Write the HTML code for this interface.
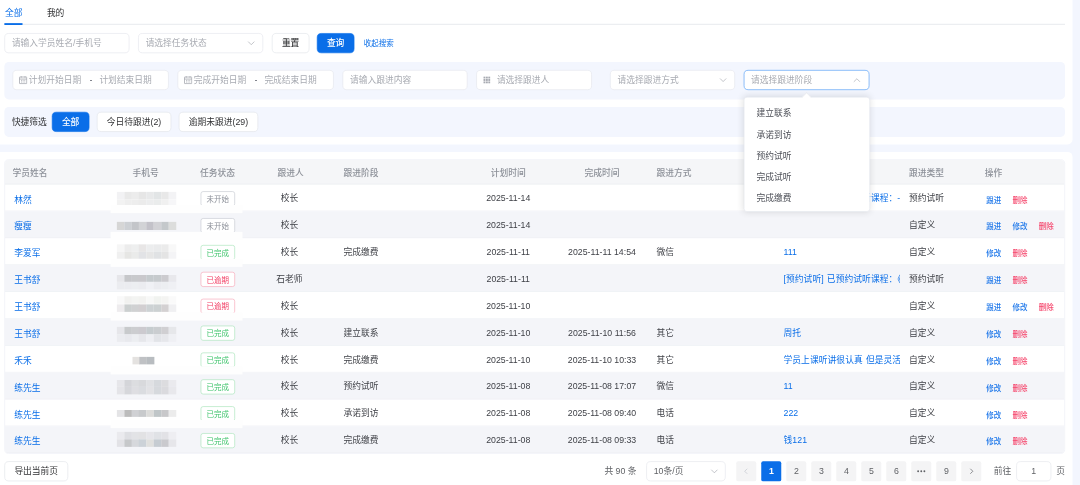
<!DOCTYPE html>
<html lang="zh-CN">
<head>
<meta charset="utf-8">
<title>跟进任务</title>
<style>
*{box-sizing:border-box;margin:0;padding:0}
html,body{width:1080px;height:485px;overflow:hidden;background:#f3f6fe}
body{font-family:"Liberation Sans","Noto Sans CJK SC",sans-serif;font-size:14px;color:#303133}
#stage{position:absolute;left:0;top:0;width:1728px;height:776px;transform:scale(.625);transform-origin:0 0;overflow:hidden;filter:blur(.55px);background:#f3f6fe}
.abs{position:absolute}
.card{position:absolute;background:#fff;border-radius:8px}
.tabtxt{position:absolute;top:10px;font-size:14px;line-height:20px;color:#303133}
.inp{position:absolute;height:32px;background:#fff;border:1px solid #e3e6ec;border-radius:7px;font-size:14px;line-height:30px;color:#a8abb2;padding-left:11px;white-space:nowrap;overflow:hidden}
.inp span{position:absolute;top:0;line-height:30px;white-space:nowrap}
.inp svg{position:absolute}
.btn{position:absolute;height:32px;border:1px solid #e0e3e9;border-radius:7px;background:#fff;font-size:14px;line-height:30px;text-align:center;color:#303133;white-space:nowrap}
.btn.pri{background:#0a6ee8;border-color:#0a6ee8;color:#fff;font-weight:500}
.panel{position:absolute;left:7px;width:1697px;background:#f3f6fe;border-radius:7px}
.tbl{position:absolute;left:7px;top:255px;width:1697px;height:471px;border:1px solid #ebeef5;border-radius:7px;overflow:hidden;background:#fff}

.th{position:absolute;left:0;top:0;width:100%;height:39px;background:#f5f6f8;border-bottom:1px solid #e9ebf0}
.th span{position:absolute;top:1.6px;line-height:38px;font-size:14px;font-weight:500;color:#8d9199;white-space:nowrap}
.tr{position:absolute;left:0;width:100%;height:43px;border-bottom:1px solid #eef0f4}
.tr.s{background:#f4f5f9}
.tr span,.tr a{position:absolute;top:2px;line-height:41px;font-size:14px;white-space:nowrap;color:#3f4147}
.tr a{color:#0a6ee8;text-decoration:none}
.tr .c{transform:translateX(-50%)}
.tr .op{top:4.8px;font-size:12px;font-weight:500;color:#1f78ea}
.tr .op.del{color:#f5466c}
.tag{position:absolute;top:10.5px;height:24px;width:55.5px;border:1px solid #c6c9d1;border-radius:4px;background:#fff;font-size:12px;line-height:25.4px;text-align:center;color:#8c9099}
.tag.g{border-color:#a6e3b8;color:#3fc46c;background:#fff}
.tag.r{border-color:#f7a3b5;color:#f23d63;background:#fff}
.mb{position:absolute;width:12px;display:block}
.pg{position:absolute;top:738px;width:32px;height:32px;border-radius:3px;background:#f4f4f5;font-size:14px;line-height:32px;text-align:center;color:#606266}
.pg.on{background:#0a6ee8;color:#fff;font-weight:bold}
.dd{z-index:5;position:absolute;left:1189.5px;top:155px;width:202px;height:184px;background:#fff;border:1px solid #e4e7ed;border-radius:5px;box-shadow:0 0 12px rgba(0,0,0,.12)}
.dd div{position:absolute;left:20px;line-height:34px;font-size:14px;color:#4a4d55;white-space:nowrap}
</style>
</head>
<body>
<div id="stage">
<div class="card" style="left:-10px;top:-10px;width:1726px;height:241px"></div>
<div class="abs" style="left:7px;top:37.5px;width:1697px;height:2px;background:#eceef1"></div>
<div class="abs" style="left:7px;top:36.5px;width:29px;height:3px;background:#0a6ee8"></div>
<div class="tabtxt" style="left:8px;color:#0a6ee8">全部</div>
<div class="tabtxt" style="left:75px">我的</div>
<div class="inp" style="left:7px;top:53px;width:200px">请输入学员姓名/手机号</div>
<div class="inp" style="left:221px;top:53px;width:200px">请选择任务状态</div><svg class="abs" style="left:395px;top:62px" width="14" height="14" viewBox="0 0 14 14"><polyline points="2.5,5 7,9.5 11.5,5" fill="none" stroke="#a8abb2" stroke-width="1.1" stroke-linecap="round" stroke-linejoin="round"/></svg>
<div class="btn" style="left:435px;top:53px;width:60px;font-weight:500">重置</div>
<div class="btn pri" style="left:507px;top:53px;width:60px">查询</div>
<div class="abs" style="left:582px;top:59px;font-size:12px;line-height:20px;color:#0a6ee8">收起搜索</div>
<div class="panel" style="top:99px;height:60px"></div>
<div class="inp" style="left:20px;top:112px;width:250px"><span style="left:25px">计划开始日期</span><span style="left:122.5px;top:-1.5px;font-weight:bold;font-size:12px;color:#7d8088">-</span><span style="left:138px">计划结束日期</span></div><svg class="abs" style="left:30px;top:121px" width="14" height="14" viewBox="0 0 14 14" fill="none" stroke="#9da0a8" stroke-width="1.15"><rect x="1.2" y="2.2" width="11.6" height="10.6" rx="0.5"/><line x1="1.2" y1="5.5" x2="12.8" y2="5.5"/><line x1="4" y1="1" x2="4" y2="3.2"/><line x1="10" y1="1" x2="10" y2="3.2"/><line x1="3.6" y1="7.6" x2="5.2" y2="7.6"/><line x1="6.2" y1="7.6" x2="7.8" y2="7.6"/><line x1="8.8" y1="7.6" x2="10.4" y2="7.6"/><line x1="3.6" y1="10.2" x2="5.2" y2="10.2"/><line x1="6.2" y1="10.2" x2="7.8" y2="10.2"/><line x1="8.8" y1="10.2" x2="10.4" y2="10.2"/></svg>
<div class="inp" style="left:284px;top:112px;width:250px"><span style="left:25px">完成开始日期</span><span style="left:122.5px;top:-1.5px;font-weight:bold;font-size:12px;color:#7d8088">-</span><span style="left:138px">完成结束日期</span></div><svg class="abs" style="left:294px;top:121px" width="14" height="14" viewBox="0 0 14 14" fill="none" stroke="#9da0a8" stroke-width="1.15"><rect x="1.2" y="2.2" width="11.6" height="10.6" rx="0.5"/><line x1="1.2" y1="5.5" x2="12.8" y2="5.5"/><line x1="4" y1="1" x2="4" y2="3.2"/><line x1="10" y1="1" x2="10" y2="3.2"/><line x1="3.6" y1="7.6" x2="5.2" y2="7.6"/><line x1="6.2" y1="7.6" x2="7.8" y2="7.6"/><line x1="8.8" y1="7.6" x2="10.4" y2="7.6"/><line x1="3.6" y1="10.2" x2="5.2" y2="10.2"/><line x1="6.2" y1="10.2" x2="7.8" y2="10.2"/><line x1="8.8" y1="10.2" x2="10.4" y2="10.2"/></svg>
<div class="inp" style="left:548px;top:112px;width:200px">请输入跟进内容</div>
<div class="inp" style="left:762px;top:112px;width:184.5px;padding-left:32px">请选择跟进人</div><svg class="abs" style="left:773px;top:122px" width="12" height="12" viewBox="0 0 12 12" fill="#a8abb2"><rect x="0.5" y="0.5" width="3.1" height="3.1"/><rect x="0.5" y="4.4" width="3.1" height="3.1"/><rect x="0.5" y="8.3" width="3.1" height="3.1"/><rect x="4.4" y="0.5" width="3.1" height="3.1"/><rect x="4.4" y="4.4" width="3.1" height="3.1"/><rect x="4.4" y="8.3" width="3.1" height="3.1"/><rect x="8.3" y="0.5" width="3.1" height="3.1"/><rect x="8.3" y="4.4" width="3.1" height="3.1"/><rect x="8.3" y="8.3" width="3.1" height="3.1"/></svg>
<div class="inp" style="left:976px;top:112px;width:200px">请选择跟进方式</div><svg class="abs" style="left:1150px;top:121px" width="14" height="14" viewBox="0 0 14 14"><polyline points="2.5,5 7,9.5 11.5,5" fill="none" stroke="#a8abb2" stroke-width="1.1" stroke-linecap="round" stroke-linejoin="round"/></svg>
<div class="inp" style="left:1189.5px;top:112px;width:201px;height:32px;border:1.8px solid #4a98f5;border-radius:7px;padding-left:11px;line-height:29px">请选择跟进阶段</div><svg class="abs" style="left:1364px;top:121px" width="14" height="14" viewBox="0 0 14 14"><polyline points="2.5,9.5 7,5 11.5,9.5" fill="none" stroke="#a8abb2" stroke-width="1.1" stroke-linecap="round" stroke-linejoin="round"/></svg>
<div class="panel" style="top:171px;height:48px"></div>
<div class="abs" style="left:19px;top:185px;line-height:20px;font-size:14px;color:#303133">快捷筛选</div>
<div class="btn pri" style="left:83px;top:179px;width:60px">全部</div>
<div class="btn" style="left:155px;top:179px;width:119px">今日待跟进(2)</div>
<div class="btn" style="left:286px;top:179px;width:127px">逾期未跟进(29)</div>
<div class="card" style="left:-10px;top:243px;width:1726px;height:560px"></div>
<div class="tbl">
<div class="th"><span style="left:12px">学员姓名</span><span style="left:225.2px;transform:translateX(-50%)">手机号</span><span style="left:340px;transform:translateX(-50%)">任务状态</span><span style="left:457.2px;transform:translateX(-50%)">跟进人</span><span style="left:541.6px">跟进阶段</span><span style="left:805.2px;transform:translateX(-50%)">计划时间</span><span style="left:955.2px;transform:translateX(-50%)">完成时间</span><span style="left:1042.4px">跟进方式</span><span style="left:1245.6px">跟进内容</span><span style="left:1446.4px">跟进类型</span><span style="left:1567.6px">操作</span></div>
<div class="tr" style="top:39px"><a style="left:14.7px;top:4.3px">林然</a><i class="mb" style="left:178.9px;top:11.8px;height:12.2px;background:#f2f2f4"></i><i class="mb" style="left:190.8px;top:11.8px;height:12.2px;background:#e9e9e9"></i><i class="mb" style="left:202.6px;top:11.8px;height:12.2px;background:#ececec"></i><i class="mb" style="left:214.4px;top:11.8px;height:12.2px;background:#e6e6e6"></i><i class="mb" style="left:226.3px;top:11.8px;height:12.2px;background:#e8e9ea"></i><i class="mb" style="left:238.2px;top:11.8px;height:12.2px;background:#e2e5e6"></i><i class="mb" style="left:250.0px;top:11.8px;height:12.2px;background:#e8e8e8"></i><i class="mb" style="left:261.9px;top:11.8px;height:12.2px;background:#f3f3f5"></i><i class="mb" style="left:178.9px;top:24.0px;height:12.2px;background:#f2f2f2"></i><i class="mb" style="left:190.8px;top:24.0px;height:12.2px;background:#eeeeee"></i><i class="mb" style="left:202.6px;top:24.0px;height:12.2px;background:#ededed"></i><i class="mb" style="left:214.4px;top:24.0px;height:12.2px;background:#ebebeb"></i><i class="mb" style="left:226.3px;top:24.0px;height:12.2px;background:#ecedee"></i><i class="mb" style="left:238.2px;top:24.0px;height:12.2px;background:#eaecec"></i><i class="mb" style="left:250.0px;top:24.0px;height:12.2px;background:#f0f0f0"></i><i class="mb" style="left:261.9px;top:24.0px;height:12.2px;background:#f6f6f8"></i><div class="tag " style="left:312.6px">未开始</div><i class="mb" style="left:169px;top:33.4px;width:211px;height:12.6px;background:#fefefe;z-index:2"></i><span class="c" style="left:455.2px">校长</span><span class="c" style="left:805.2px">2025-11-14</span><a style="left:1245.6px;width:186.4px;overflow:hidden;letter-spacing:.1px;word-spacing:1px">[预约试听] 已预约试听课程：-</a><span style="left:1446.4px">预约试听</span><span class="op" style="left:1570px">跟进</span><span class="op del" style="left:1612px">删除</span></div>
<div class="tr s" style="top:82px"><a style="left:14.7px;top:4.3px">瘦瘦</a><i class="mb" style="left:178.9px;top:17.2px;height:12.4px;background:#d6d6d6"></i><i class="mb" style="left:190.8px;top:17.2px;height:12.4px;background:#cdd0d4"></i><i class="mb" style="left:202.6px;top:17.2px;height:12.4px;background:#c3c5c9"></i><i class="mb" style="left:214.4px;top:17.2px;height:12.4px;background:#d2d3d6"></i><i class="mb" style="left:226.3px;top:17.2px;height:12.4px;background:#c3c2c9"></i><i class="mb" style="left:238.2px;top:17.2px;height:12.4px;background:#d2d2d6"></i><i class="mb" style="left:250.0px;top:17.2px;height:12.4px;background:#c4c8cb"></i><i class="mb" style="left:261.9px;top:17.2px;height:12.4px;background:#dcdddc"></i><div class="tag " style="left:312.6px">未开始</div><i class="mb" style="left:169px;top:33.4px;width:211px;height:12.6px;background:#fefefe;z-index:2"></i><span class="c" style="left:455.2px">校长</span><span class="c" style="left:805.2px">2025-11-14</span><span style="left:1446.4px">自定义</span><span class="op" style="left:1570px">跟进</span><span class="op" style="left:1612px">修改</span><span class="op del" style="left:1654px">删除</span></div>
<div class="tr" style="top:125px"><a style="left:14.7px;top:4.3px">李爱军</a><i class="mb" style="left:178.9px;top:10.0px;height:12.2px;background:#f6f6f6"></i><i class="mb" style="left:190.8px;top:10.0px;height:12.2px;background:#ececec"></i><i class="mb" style="left:202.6px;top:10.0px;height:12.2px;background:#eeefef"></i><i class="mb" style="left:214.4px;top:10.0px;height:12.2px;background:#e8e6e6"></i><i class="mb" style="left:226.3px;top:10.0px;height:12.2px;background:#ecedee"></i><i class="mb" style="left:238.2px;top:10.0px;height:12.2px;background:#eaebec"></i><i class="mb" style="left:250.0px;top:10.0px;height:12.2px;background:#ebebeb"></i><i class="mb" style="left:261.9px;top:10.0px;height:12.2px;background:#f8f8f8"></i><i class="mb" style="left:178.9px;top:22.2px;height:12.2px;background:#f0f0f0"></i><i class="mb" style="left:190.8px;top:22.2px;height:12.2px;background:#e6e6e4"></i><i class="mb" style="left:202.6px;top:22.2px;height:12.2px;background:#eaebea"></i><i class="mb" style="left:214.4px;top:22.2px;height:12.2px;background:#e2e3e6"></i><i class="mb" style="left:226.3px;top:22.2px;height:12.2px;background:#e6e6e6"></i><i class="mb" style="left:238.2px;top:22.2px;height:12.2px;background:#e0e2e4"></i><i class="mb" style="left:250.0px;top:22.2px;height:12.2px;background:#e4e4e4"></i><i class="mb" style="left:261.9px;top:22.2px;height:12.2px;background:#f4f4f6"></i><div class="tag g" style="left:312.6px">已完成</div><i class="mb" style="left:169px;top:33.4px;width:211px;height:12.6px;background:#fefefe;z-index:2"></i><span class="c" style="left:455.2px">校长</span><span style="left:541.6px">完成缴费</span><span class="c" style="left:805.2px">2025-11-11</span><span class="c" style="left:955.2px">2025-11-11 14:54</span><span style="left:1042.4px">微信</span><a style="left:1245.6px;width:186.4px;overflow:hidden;letter-spacing:.1px;word-spacing:1px">111</a><span style="left:1446.4px">自定义</span><span class="op" style="left:1570px">修改</span><span class="op del" style="left:1612px">删除</span></div>
<div class="tr s" style="top:168px"><a style="left:14.7px;top:4.3px">王书舒</a><i class="mb" style="left:178.9px;top:15.6px;height:11.6px;background:#e6e6ea"></i><i class="mb" style="left:190.8px;top:15.6px;height:11.6px;background:#c6c7ca"></i><i class="mb" style="left:202.6px;top:15.6px;height:11.6px;background:#c8c9cc"></i><i class="mb" style="left:214.4px;top:15.6px;height:11.6px;background:#c9c8cc"></i><i class="mb" style="left:226.3px;top:15.6px;height:11.6px;background:#c5cacd"></i><i class="mb" style="left:238.2px;top:15.6px;height:11.6px;background:#c6cacd"></i><i class="mb" style="left:250.0px;top:15.6px;height:11.6px;background:#cccbcf"></i><i class="mb" style="left:261.9px;top:15.6px;height:11.6px;background:#e8e8ec"></i><i class="mb" style="left:178.9px;top:27.2px;height:11.6px;background:#ebecf0"></i><i class="mb" style="left:190.8px;top:27.2px;height:11.6px;background:#ebecf0"></i><i class="mb" style="left:202.6px;top:27.2px;height:11.6px;background:#eceef1"></i><i class="mb" style="left:214.4px;top:27.2px;height:11.6px;background:#ebecf0"></i><i class="mb" style="left:226.3px;top:27.2px;height:11.6px;background:#f0f1f5"></i><i class="mb" style="left:238.2px;top:27.2px;height:11.6px;background:#ebecf0"></i><i class="mb" style="left:250.0px;top:27.2px;height:11.6px;background:#eceef1"></i><i class="mb" style="left:261.9px;top:27.2px;height:11.6px;background:#eff0f4"></i><div class="tag r" style="left:312.6px">已逾期</div><span class="c" style="left:455.2px">石老师</span><span class="c" style="left:805.2px">2025-11-11</span><a style="left:1245.6px;width:186.4px;overflow:hidden;letter-spacing:.1px;word-spacing:1px">[预约试听] 已预约试听课程：《舞蹈》</a><span style="left:1446.4px">预约试听</span><span class="op" style="left:1570px">跟进</span><span class="op del" style="left:1612px">删除</span></div>
<div class="tr" style="top:211px"><a style="left:14.7px;top:4.3px">王书舒</a><i class="mb" style="left:178.9px;top:7.2px;height:12.3px;background:#f9f9f9"></i><i class="mb" style="left:190.8px;top:7.2px;height:12.3px;background:#f1f1ef"></i><i class="mb" style="left:202.6px;top:7.2px;height:12.3px;background:#f3f4f2"></i><i class="mb" style="left:214.4px;top:7.2px;height:12.3px;background:#f2f2f0"></i><i class="mb" style="left:226.3px;top:7.2px;height:12.3px;background:#f7f8f7"></i><i class="mb" style="left:238.2px;top:7.2px;height:12.3px;background:#f1f3f0"></i><i class="mb" style="left:250.0px;top:7.2px;height:12.3px;background:#f4f4f2"></i><i class="mb" style="left:261.9px;top:7.2px;height:12.3px;background:#fafafa"></i><i class="mb" style="left:178.9px;top:19.5px;height:12.3px;background:#eeecee"></i><i class="mb" style="left:190.8px;top:19.5px;height:12.3px;background:#ccd0d0"></i><i class="mb" style="left:202.6px;top:19.5px;height:12.3px;background:#d0d1d2"></i><i class="mb" style="left:214.4px;top:19.5px;height:12.3px;background:#d2cfd1"></i><i class="mb" style="left:226.3px;top:19.5px;height:12.3px;background:#cdd2d4"></i><i class="mb" style="left:238.2px;top:19.5px;height:12.3px;background:#ccd1d2"></i><i class="mb" style="left:250.0px;top:19.5px;height:12.3px;background:#d4d1d2"></i><i class="mb" style="left:261.9px;top:19.5px;height:12.3px;background:#f0f0f2"></i><div class="tag r" style="left:312.6px">已逾期</div><i class="mb" style="left:169px;top:33.4px;width:211px;height:12.6px;background:#fefefe;z-index:2"></i><span class="c" style="left:455.2px">校长</span><span class="c" style="left:805.2px">2025-11-10</span><span style="left:1446.4px">自定义</span><span class="op" style="left:1570px">跟进</span><span class="op" style="left:1612px">修改</span><span class="op del" style="left:1654px">删除</span></div>
<div class="tr s" style="top:254px"><a style="left:14.7px;top:4.3px">王书舒</a><i class="mb" style="left:178.9px;top:12.8px;height:12px;background:#e6e6ea"></i><i class="mb" style="left:190.8px;top:12.8px;height:12px;background:#c8cacc"></i><i class="mb" style="left:202.6px;top:12.8px;height:12px;background:#cccdd0"></i><i class="mb" style="left:214.4px;top:12.8px;height:12px;background:#cccacf"></i><i class="mb" style="left:226.3px;top:12.8px;height:12px;background:#c6cccf"></i><i class="mb" style="left:238.2px;top:12.8px;height:12px;background:#cacdd0"></i><i class="mb" style="left:250.0px;top:12.8px;height:12px;background:#d0cfd2"></i><i class="mb" style="left:261.9px;top:12.8px;height:12px;background:#e6e7ea"></i><i class="mb" style="left:178.9px;top:24.8px;height:12px;background:#ebecf0"></i><i class="mb" style="left:190.8px;top:24.8px;height:12px;background:#e8e9ed"></i><i class="mb" style="left:202.6px;top:24.8px;height:12px;background:#eceef1"></i><i class="mb" style="left:214.4px;top:24.8px;height:12px;background:#e6e7eb"></i><i class="mb" style="left:226.3px;top:24.8px;height:12px;background:#eeeff3"></i><i class="mb" style="left:238.2px;top:24.8px;height:12px;background:#e2e4e8"></i><i class="mb" style="left:250.0px;top:24.8px;height:12px;background:#e6e7eb"></i><i class="mb" style="left:261.9px;top:24.8px;height:12px;background:#eff0f4"></i><div class="tag g" style="left:312.6px">已完成</div><span class="c" style="left:455.2px">校长</span><span style="left:541.6px">建立联系</span><span class="c" style="left:805.2px">2025-11-10</span><span class="c" style="left:955.2px">2025-11-10 11:56</span><span style="left:1042.4px">其它</span><a style="left:1245.6px;width:186.4px;overflow:hidden;letter-spacing:.1px;word-spacing:1px">周托</a><span style="left:1446.4px">自定义</span><span class="op" style="left:1570px">修改</span><span class="op del" style="left:1612px">删除</span></div>
<div class="tr" style="top:297px"><a style="left:14.7px;top:4.3px">禾禾</a><i class="mb" style="left:203.5px;top:18.2px;height:11.8px;background:#e4e2e0"></i><i class="mb" style="left:215.4px;top:18.2px;height:11.8px;background:#bfc1c4"></i><i class="mb" style="left:227.2px;top:18.2px;height:11.8px;background:#b8bcc0"></i><div class="tag g" style="left:312.6px">已完成</div><i class="mb" style="left:169px;top:33.4px;width:211px;height:12.6px;background:#fefefe;z-index:2"></i><span class="c" style="left:455.2px">校长</span><span style="left:541.6px">完成缴费</span><span class="c" style="left:805.2px">2025-11-10</span><span class="c" style="left:955.2px">2025-11-10 10:33</span><span style="left:1042.4px">其它</span><a style="left:1245.6px;width:186.4px;overflow:hidden;letter-spacing:.1px;word-spacing:1px">学员上课听讲很认真 但是灵活</a><span style="left:1446.4px">自定义</span><span class="op" style="left:1570px">修改</span><span class="op del" style="left:1612px">删除</span></div>
<div class="tr s" style="top:340px"><a style="left:14.7px;top:4.3px">练先生</a><i class="mb" style="left:178.9px;top:11.6px;height:11.8px;background:#e6e6ea"></i><i class="mb" style="left:190.8px;top:11.6px;height:11.8px;background:#d4d5d9"></i><i class="mb" style="left:202.6px;top:11.6px;height:11.8px;background:#dcdde0"></i><i class="mb" style="left:214.4px;top:11.6px;height:11.8px;background:#d8d9dc"></i><i class="mb" style="left:226.3px;top:11.6px;height:11.8px;background:#e0e1e4"></i><i class="mb" style="left:238.2px;top:11.6px;height:11.8px;background:#d6d9dd"></i><i class="mb" style="left:250.0px;top:11.6px;height:11.8px;background:#dcdcdf"></i><i class="mb" style="left:261.9px;top:11.6px;height:11.8px;background:#eaeaee"></i><i class="mb" style="left:178.9px;top:23.4px;height:11.8px;background:#e4e4e8"></i><i class="mb" style="left:190.8px;top:23.4px;height:11.8px;background:#d6d7db"></i><i class="mb" style="left:202.6px;top:23.4px;height:11.8px;background:#dedee2"></i><i class="mb" style="left:214.4px;top:23.4px;height:11.8px;background:#dadce0"></i><i class="mb" style="left:226.3px;top:23.4px;height:11.8px;background:#e2e2e5"></i><i class="mb" style="left:238.2px;top:23.4px;height:11.8px;background:#d6d9dd"></i><i class="mb" style="left:250.0px;top:23.4px;height:11.8px;background:#dadade"></i><i class="mb" style="left:261.9px;top:23.4px;height:11.8px;background:#e8e8ec"></i><div class="tag g" style="left:312.6px">已完成</div><span class="c" style="left:455.2px">校长</span><span style="left:541.6px">预约试听</span><span class="c" style="left:805.2px">2025-11-08</span><span class="c" style="left:955.2px">2025-11-08 17:07</span><span style="left:1042.4px">微信</span><a style="left:1245.6px;width:186.4px;overflow:hidden;letter-spacing:.1px;word-spacing:1px">11</a><span style="left:1446.4px">自定义</span><span class="op" style="left:1570px">修改</span><span class="op del" style="left:1612px">删除</span></div>
<div class="tr" style="top:383px"><a style="left:14.7px;top:4.3px">练先生</a><i class="mb" style="left:178.9px;top:16.6px;height:11.4px;background:#e4e4e6"></i><i class="mb" style="left:190.8px;top:16.6px;height:11.4px;background:#bcbcbc"></i><i class="mb" style="left:202.6px;top:16.6px;height:11.4px;background:#d0d1d4"></i><i class="mb" style="left:214.4px;top:16.6px;height:11.4px;background:#c8cacc"></i><i class="mb" style="left:226.3px;top:16.6px;height:11.4px;background:#dcdcda"></i><i class="mb" style="left:238.2px;top:16.6px;height:11.4px;background:#c0c6c8"></i><i class="mb" style="left:250.0px;top:16.6px;height:11.4px;background:#c8c8ca"></i><i class="mb" style="left:261.9px;top:16.6px;height:11.4px;background:#ececec"></i><div class="tag g" style="left:312.6px">已完成</div><i class="mb" style="left:169px;top:33.4px;width:211px;height:12.6px;background:#fefefe;z-index:2"></i><span class="c" style="left:455.2px">校长</span><span style="left:541.6px">承诺到访</span><span class="c" style="left:805.2px">2025-11-08</span><span class="c" style="left:955.2px">2025-11-08 09:40</span><span style="left:1042.4px">电话</span><a style="left:1245.6px;width:186.4px;overflow:hidden;letter-spacing:.1px;word-spacing:1px">222</a><span style="left:1446.4px">自定义</span><span class="op" style="left:1570px">修改</span><span class="op del" style="left:1612px">删除</span></div>
<div class="tr s" style="top:426px"><a style="left:14.7px;top:4.3px">练先生</a><i class="mb" style="left:178.9px;top:9.2px;height:12px;background:#eaeaee"></i><i class="mb" style="left:190.8px;top:9.2px;height:12px;background:#dedfe3"></i><i class="mb" style="left:202.6px;top:9.2px;height:12px;background:#e2e3e6"></i><i class="mb" style="left:214.4px;top:9.2px;height:12px;background:#e2e2e4"></i><i class="mb" style="left:226.3px;top:9.2px;height:12px;background:#e6e6ea"></i><i class="mb" style="left:238.2px;top:9.2px;height:12px;background:#e0e2e6"></i><i class="mb" style="left:250.0px;top:9.2px;height:12px;background:#e2e2e6"></i><i class="mb" style="left:261.9px;top:9.2px;height:12px;background:#eeeef2"></i><i class="mb" style="left:178.9px;top:21.2px;height:12px;background:#e2e2e6"></i><i class="mb" style="left:190.8px;top:21.2px;height:12px;background:#c6c8ca"></i><i class="mb" style="left:202.6px;top:21.2px;height:12px;background:#d6d8dc"></i><i class="mb" style="left:214.4px;top:21.2px;height:12px;background:#ccd2d8"></i><i class="mb" style="left:226.3px;top:21.2px;height:12px;background:#e0e0de"></i><i class="mb" style="left:238.2px;top:21.2px;height:12px;background:#c6ccd2"></i><i class="mb" style="left:250.0px;top:21.2px;height:12px;background:#cacace"></i><i class="mb" style="left:261.9px;top:21.2px;height:12px;background:#e6e6ea"></i><div class="tag g" style="left:312.6px">已完成</div><span class="c" style="left:455.2px">校长</span><span style="left:541.6px">完成缴费</span><span class="c" style="left:805.2px">2025-11-08</span><span class="c" style="left:955.2px">2025-11-08 09:33</span><span style="left:1042.4px">电话</span><a style="left:1245.6px;width:186.4px;overflow:hidden;letter-spacing:.1px;word-spacing:1px">钱121</a><span style="left:1446.4px">自定义</span><span class="op" style="left:1570px">修改</span><span class="op del" style="left:1612px">删除</span></div>
</div>
<div class="btn" style="left:7px;top:738px;width:102px">导出当前页</div>
<div class="abs" style="left:967px;top:738px;line-height:32px;font-size:14px;color:#606266">共 90 条</div>
<div class="inp" style="left:1034px;top:738px;width:127px;color:#606266">10条/页</div><svg class="abs" style="left:1136px;top:747px" width="14" height="14" viewBox="0 0 14 14"><polyline points="2.5,5 7,9.5 11.5,5" fill="none" stroke="#a8abb2" stroke-width="1.1" stroke-linecap="round" stroke-linejoin="round"/></svg>
<div class="pg" style="left:1178.4px"><svg class="abs" style="left:10px;top:10px" width="12" height="12" viewBox="0 0 12 12"><polyline points="7.5,2 3.5,6 7.5,10" fill="none" stroke="#c0c4cc" stroke-width="1.1"/></svg></div>
<div class="pg on" style="left:1218.4px">1</div>
<div class="pg" style="left:1258.4px">2</div>
<div class="pg" style="left:1298.4px">3</div>
<div class="pg" style="left:1338.4px">4</div>
<div class="pg" style="left:1378.4px">5</div>
<div class="pg" style="left:1418.4px">6</div>
<div class="pg" style="left:1458.4px"><svg class="abs" style="left:8px;top:13px" width="16" height="6" viewBox="0 0 16 6" fill="#606266"><circle cx="3" cy="3" r="1.5"/><circle cx="8" cy="3" r="1.5"/><circle cx="13" cy="3" r="1.5"/></svg></div>
<div class="pg" style="left:1498.4px">9</div>
<div class="pg" style="left:1538.4px"><svg class="abs" style="left:10px;top:10px" width="12" height="12" viewBox="0 0 12 12"><polyline points="4.5,2 8.5,6 4.5,10" fill="none" stroke="#606266" stroke-width="1.1"/></svg></div>
<div class="abs" style="left:1590px;top:738px;line-height:32px;font-size:14px;color:#606266">前往</div>
<div class="inp" style="left:1626px;top:738px;width:56px;padding:0;text-align:center;color:#606266">1</div>
<div class="abs" style="left:1690px;top:738px;line-height:32px;font-size:14px;color:#606266">页</div>
<div class="dd">
<div class="abs" style="left:94px;top:-6px;width:11px;height:11px;background:#fff;border-left:1px solid #e4e7ed;border-top:1px solid #e4e7ed;transform:rotate(45deg)"></div>
<div style="top:8px">建立联系</div>
<div style="top:42px">承诺到访</div>
<div style="top:76px">预约试听</div>
<div style="top:110px">完成试听</div>
<div style="top:144px">完成缴费</div>
</div>
</div>
</body>
</html>
